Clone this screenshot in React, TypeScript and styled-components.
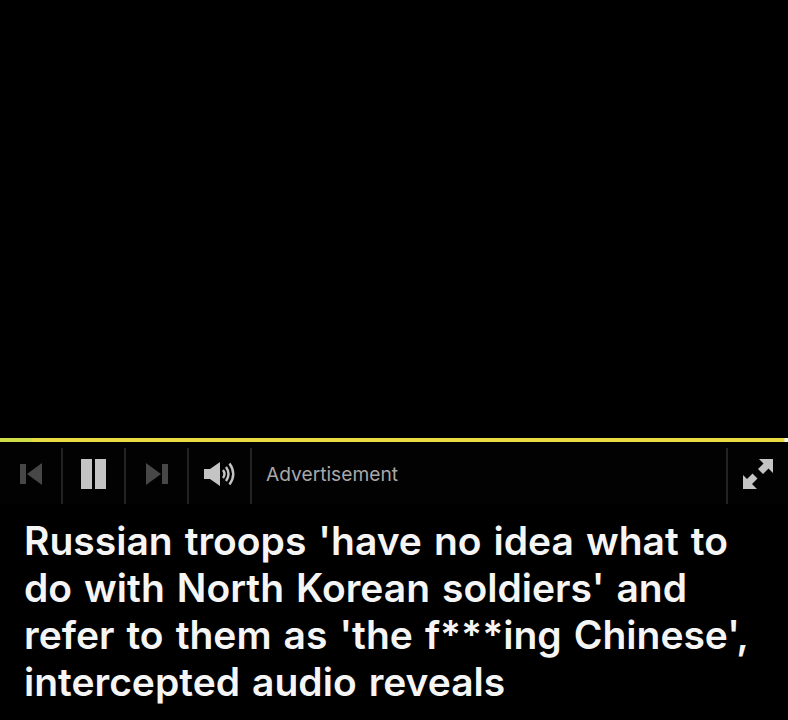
import { createGlobalStyle } from "styled-components";
import styled from "styled-components";

const GlobalStyle = createGlobalStyle`
    html, body {
        margin: 0;
        padding: 0;
        background: #000;
    }
`;

const App = () => {
    return (
        <Page>
            <GlobalStyle />
            <VideoArea />
            <ProgressBar />
            <Controls>
                <ControlCell dim>
                    <svg width="24" height="22" viewBox="0 0 24 22" fill="currentColor">
                        <rect x="1" y="1" width="6" height="20" />
                        <path d="M23 0 L8 11 L23 22 Z" />
                    </svg>
                </ControlCell>
                <ControlCell>
                    <svg width="28" height="30" viewBox="0 0 28 30" fill="currentColor">
                        <rect x="1" y="0" width="11" height="30" />
                        <rect x="15" y="0" width="11" height="30" />
                    </svg>
                </ControlCell>
                <ControlCell dim>
                    <svg width="24" height="22" viewBox="0 0 24 22" fill="currentColor">
                        <path d="M1 0 L16 11 L1 22 Z" />
                        <rect x="17" y="1" width="6" height="20" />
                    </svg>
                </ControlCell>
                <ControlCell>
                    <svg width="32" height="26" viewBox="0 0 32 26" fill="none">
                        <path d="M0 8 H6 L16 1 V25 L6 18 H0 Z" fill="currentColor" />
                        <path d="M19 9 Q22 13 19 17" stroke="currentColor" strokeWidth="2.4" />
                        <path d="M22 6 Q27 13 22 20" stroke="currentColor" strokeWidth="2.4" />
                        <path d="M25.5 2.5 Q33 13 25.5 23.5" stroke="currentColor" strokeWidth="2.4" />
                    </svg>
                </ControlCell>
                <Label>Advertisement</Label>
                <ExpandCell>
                    <svg width="32" height="32" viewBox="0 0 32 32" fill="currentColor">
                        <path d="M17 1 H31 V15 L26.5 10.5 L21 16 L16 11 L21.5 5.5 Z" />
                        <path d="M1 17 L5 21 L10.5 15.5 L15.5 20.5 L10 26 L15 31 H1 Z" />
                    </svg>
                </ExpandCell>
            </Controls>
            <Headline>
                Russian troops 'have no idea what to do with North Korean soldiers' and refer to them as 'the f***ing Chinese', intercepted audio reveals
            </Headline>
        </Page>
    );
};

const Page = styled.div`
    display: flex;
    flex-direction: column;
    width: 788px;
    height: 720px;
    overflow: hidden;
    background: #000;
`;

const VideoArea = styled.div`
    height: 438px;
    background: #000;
`;

const ProgressBar = styled.div`
    height: 4px;
    background: linear-gradient(to right, #cfdc4a 0, #cfdc4a 30px, #e8dc45 34px, #e8dc45 784px, #f4f4f4 785px);
`;

const Controls = styled.div`
    display: flex;
    align-items: stretch;
    height: 56px;
    padding-top: 6px;
    color: #c4c4c4;
    background: #020203;
`;

const ControlCell = styled.div<{ dim?: boolean }>`
    display: flex;
    align-items: center;
    justify-content: center;
    width: 63px;
    padding-bottom: 4px;
    box-sizing: border-box;
    border-right: 2px solid #222;
    color: ${({ dim }) => (dim ? "#474747" : "#c4c4c4")};
`;

const Label = styled.div`
    display: flex;
    align-items: center;
    flex: 1;
    padding: 0 0 4px 14px;
    font: 400 19.2px "Inter", sans-serif;
    color: #a8a8a8;
`;

const ExpandCell = styled.div`
    display: flex;
    align-items: center;
    justify-content: center;
    width: 62px;
    padding-bottom: 4px;
    box-sizing: border-box;
    border-left: 2px solid #222;
    color: #c4c4c4;
`;

const Headline = styled.h1`
    margin: 0;
    padding: 13px 24px 0;
    font: 600 39px/47px "Inter", sans-serif;
    word-spacing: 2.2px;
    color: #f5f5f5;
`;

export default App;
